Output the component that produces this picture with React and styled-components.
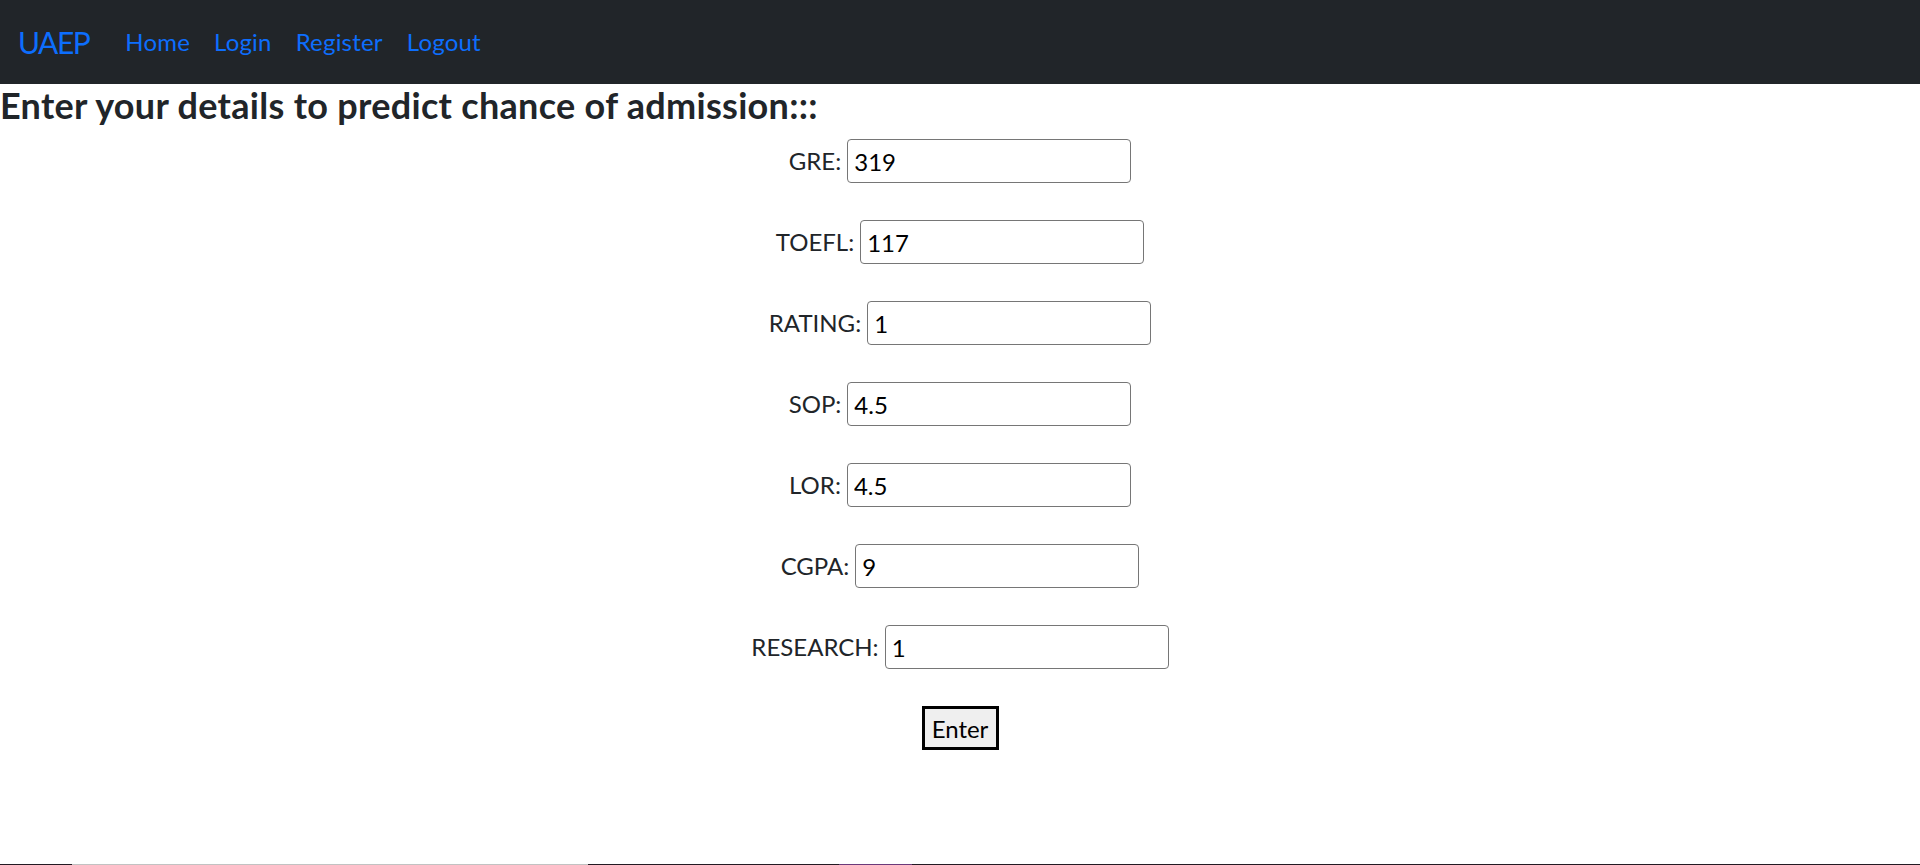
import React, { useState } from 'react';
import styled, { createGlobalStyle } from 'styled-components';

const GlobalStyle = createGlobalStyle`
  html, body {
    margin: 0;
    padding: 0;
  }
  body {
    font-family: Lato, "Open Sans", "Noto Sans", sans-serif;
    color: #212529;
    background: #fff;
  }
  * {
    box-sizing: border-box;
  }
`

const Page = styled.div`
  min-height: 100vh;
  display: flex;
  flex-direction: column;
`

const Navbar = styled.nav`
  background: #212529;
  padding: 12px 18px;
  display: flex;
  align-items: center;
`

const Brand = styled.a`
  font-size: 30px;
  line-height: 45px;
  padding: 7.5px 0;
  margin-right: 24px;
  letter-spacing: -1.5px;
  color: #0d6efd;
  text-decoration: none;
  cursor: pointer;
`

const NavList = styled.ul`
  display: flex;
  list-style: none;
  margin: 0;
  padding: 0;
`

const NavLink = styled.a`
  display: block;
  padding: 12px;
  font-size: 24px;
  line-height: 36px;
  letter-spacing: 0.2px;
  color: #0d6efd;
  text-decoration: none;
  cursor: pointer;
`

const Heading = styled.h4`
  margin: 0 0 12px;
  font-size: 36px;
  line-height: 1.2;
  font-weight: 700;
  letter-spacing: 0.3px;
  color: #212529;
`

const Form = styled.form`
  display: flex;
  flex-direction: column;
  align-items: center;
  gap: 37px;
`

const Row = styled.div`
  display: flex;
  align-items: center;
  gap: 6px;
`

const Label = styled.label`
  font-size: 24px;
  line-height: 36px;
  color: #212529;
`

const Input = styled.input`
  width: 284px;
  height: 44px;
  padding: 0 6px;
  border: 1px solid #767676;
  border-radius: 4px;
  font-family: inherit;
  font-size: 24px;
  color: #000;
  background: #fff;
  outline: none;
`

const Button = styled.button`
  width: 77px;
  height: 44px;
  padding: 0;
  border: 3px solid #000;
  background: #efefef;
  font-family: inherit;
  font-size: 24px;
  color: #000;
  cursor: pointer;
`

const Spacer = styled.div`
  flex: 1;
`

const TaskStrip = styled.div`
  height: 1px;
  background: linear-gradient(
    to right,
    #231a23 0, #231a23 72px,
    #c2c2c2 72px, #c2c2c2 588px,
    #231a23 588px, #231a23 839px,
    #6b3a7a 839px, #6b3a7a 912px,
    #231a23 912px
  );
`

const fields = [
  { name: 'gre', label: 'GRE', value: '319' },
  { name: 'toefl', label: 'TOEFL', value: '117' },
  { name: 'rating', label: 'RATING', value: '1' },
  { name: 'sop', label: 'SOP', value: '4.5' },
  { name: 'lor', label: 'LOR', value: '4.5' },
  { name: 'cgpa', label: 'CGPA', value: '9' },
  { name: 'research', label: 'RESEARCH', value: '1' },
];

export default function App() {
  const [values, setValues] = useState(
    fields.reduce((acc, f) => ({ ...acc, [f.name]: f.value }), {})
  );

  const onChange = (e) => {
    setValues({ ...values, [e.target.name]: e.target.value });
  };

  return (
    <Page>
      <GlobalStyle />
      <Navbar>
        <Brand>UAEP</Brand>
        <NavList>
          <li><NavLink>Home</NavLink></li>
          <li><NavLink>Login</NavLink></li>
          <li><NavLink>Register</NavLink></li>
          <li><NavLink>Logout</NavLink></li>
        </NavList>
      </Navbar>
      <Heading>Enter your details to predict chance of admission:::</Heading>
      <Form onSubmit={(e) => e.preventDefault()}>
        {fields.map((f) => (
          <Row key={f.name}>
            <Label htmlFor={f.name}>{f.label}:</Label>
            <Input
              id={f.name}
              name={f.name}
              type="text"
              value={values[f.name]}
              onChange={onChange}
            />
          </Row>
        ))}
        <Button type="submit">Enter</Button>
      </Form>
      <Spacer />
      <TaskStrip />
    </Page>
  );
}
